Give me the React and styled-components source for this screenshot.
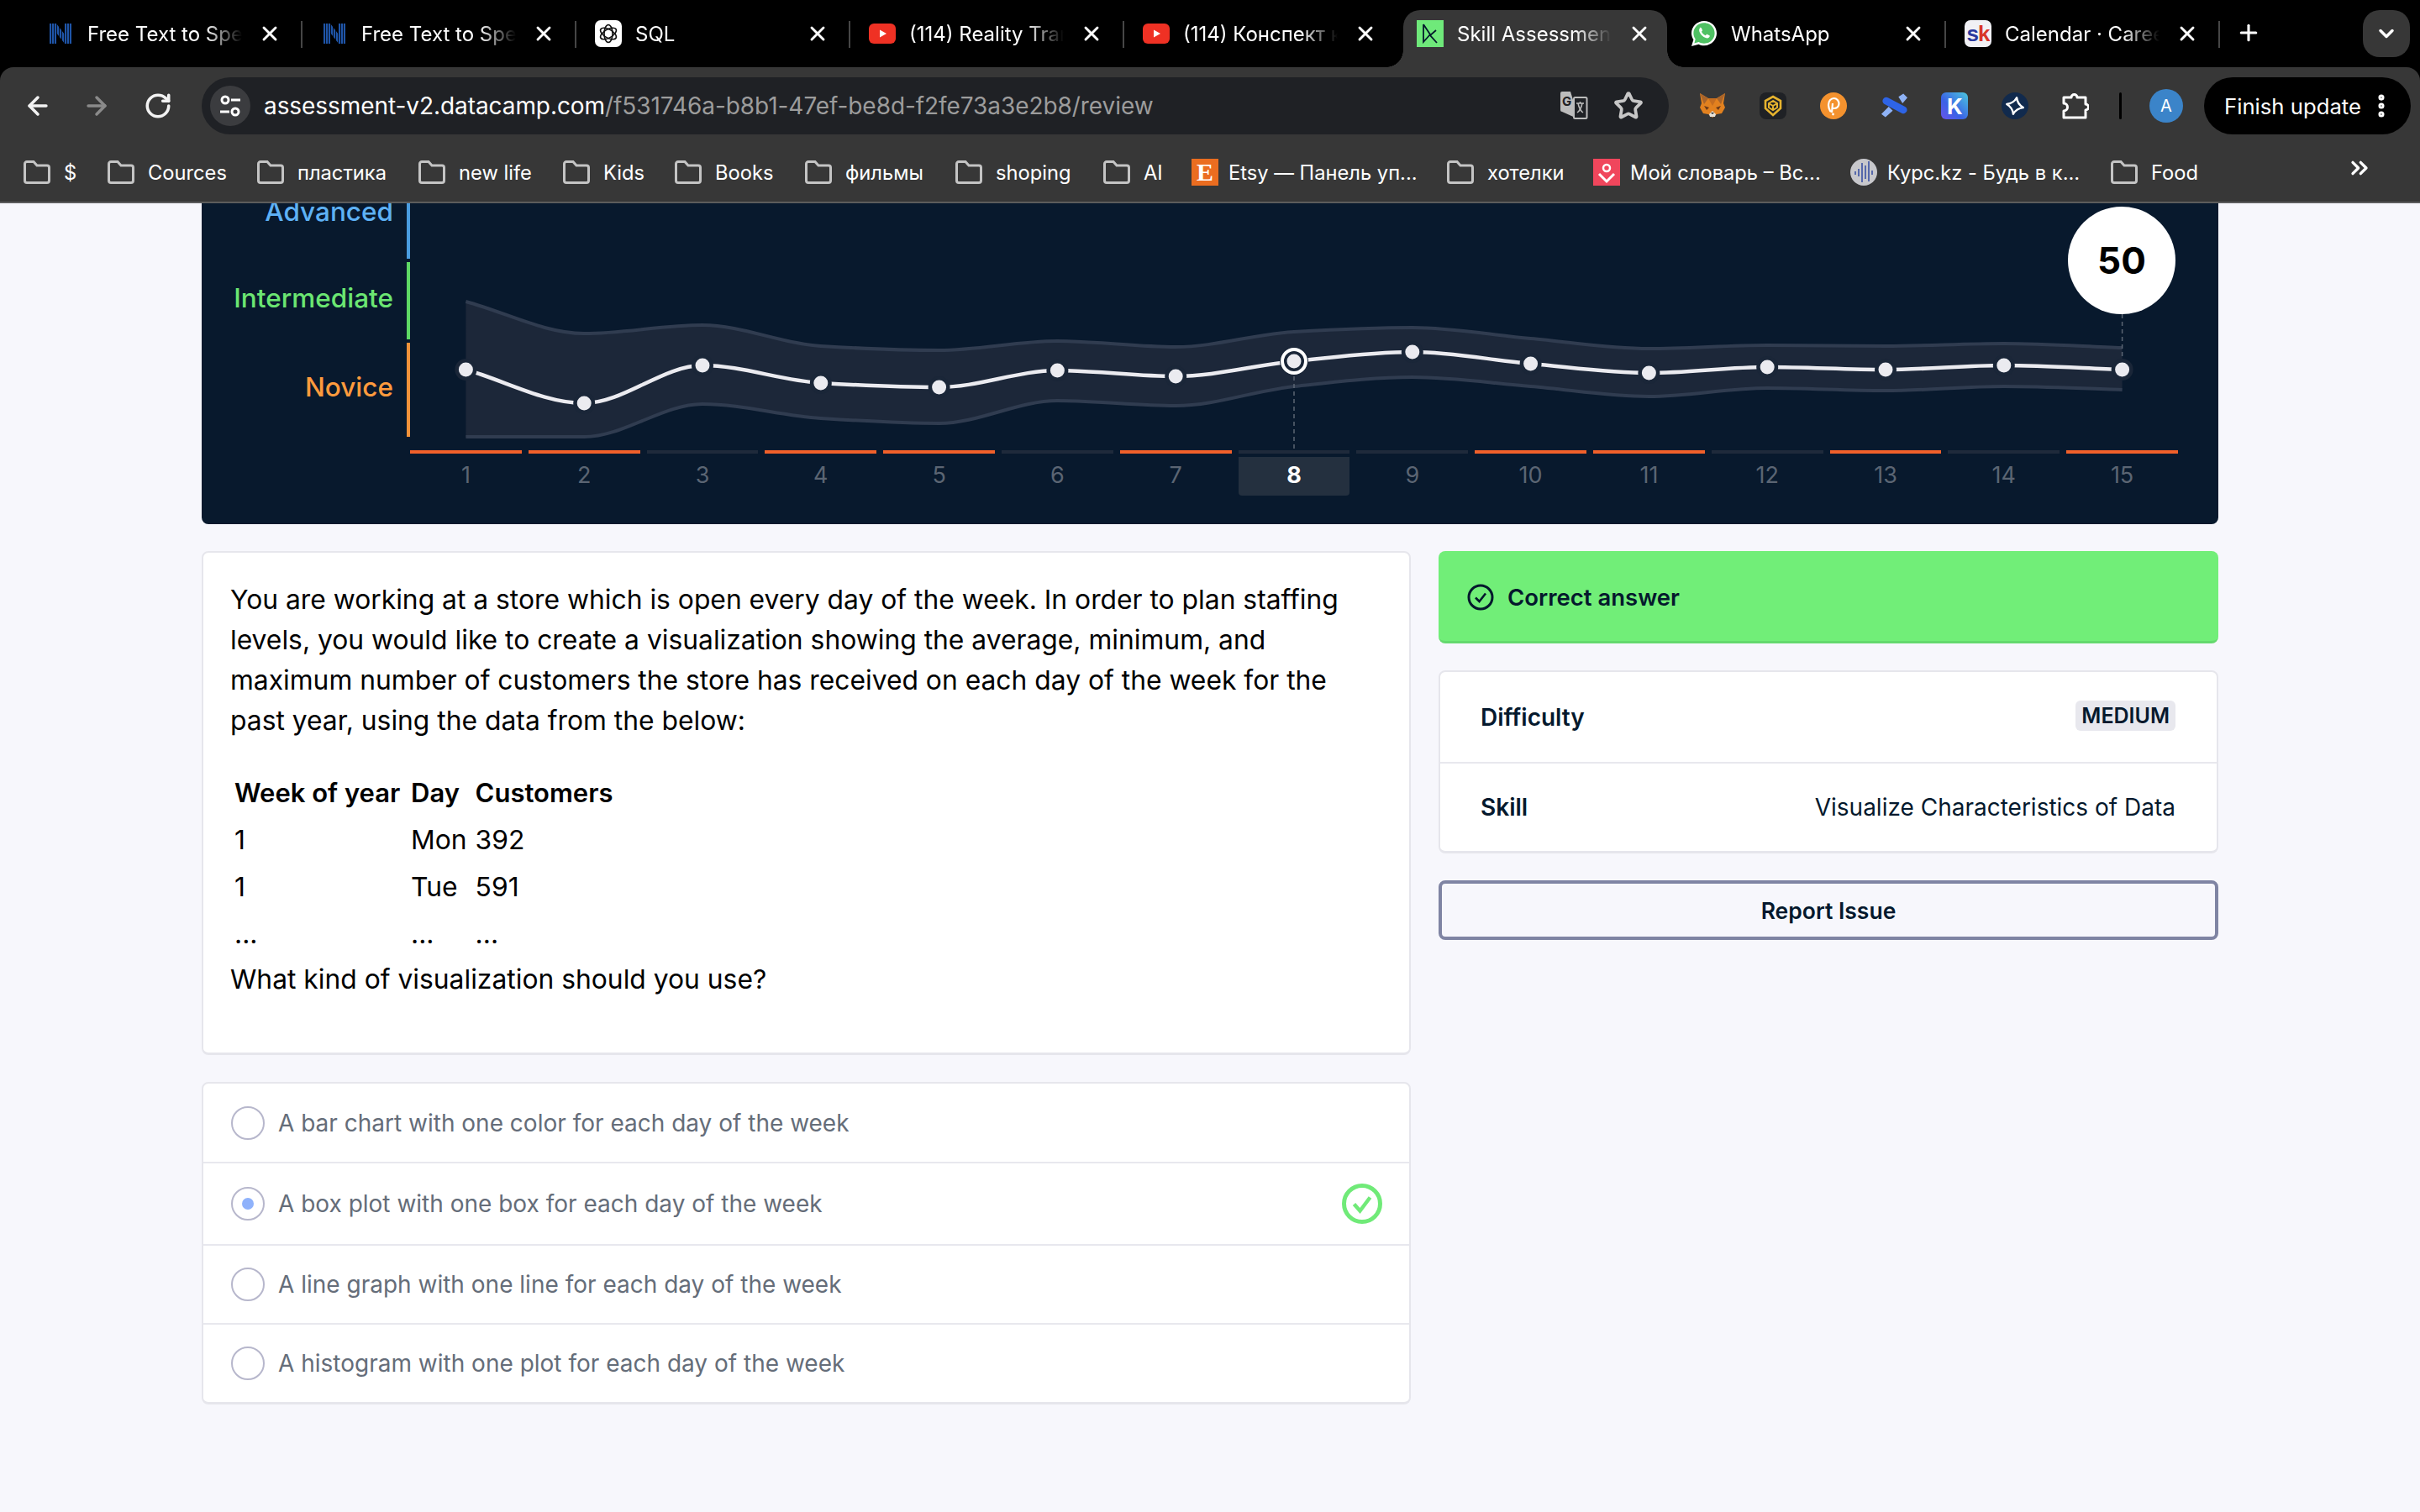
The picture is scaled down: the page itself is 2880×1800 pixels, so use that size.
import React from 'react';
import styled, { createGlobalStyle } from 'styled-components';
import { ArrowLeft, ArrowRight, RotateCw, Star, X, Plus, ChevronDown, EllipsisVertical, ChevronsRight } from 'lucide-react';

const GlobalStyle = createGlobalStyle`
  html, body {
    margin: 0;
    padding: 0;
    background: #f7f7fc;
  }
  * {
    box-sizing: border-box;
  }
`;

const chromeFont = `Inter, "Noto Sans", sans-serif`;
const pageFont = `Inter, "Noto Sans", sans-serif`;

const Screen = styled.div`
  width: 2880px;
  height: 1800px;
  overflow: hidden;
  display: flex;
  flex-direction: column;
  background: #f7f7fc;
`;

/* browser chrome */

const Chrome = styled.header`
  background: #000;
  font-family: ${chromeFont};
  color: #fff;
`;

const TabStrip = styled.div`
  height: 80px;
  padding-left: 34px;
  display: flex;
  align-items: flex-end;
  position: relative;
`;

const Tab = styled.div`
  width: 326px;
  height: 68px;
  padding: 0 0 12px 22px;
  display: flex;
  align-items: center;
  position: relative;
  flex: none;
  &::after {
    content: '';
    display: ${p => (p.$sep ? 'block' : 'none')};
    position: absolute;
    right: 0;
    top: 13px;
    width: 2px;
    height: 32px;
    background: #464646;
  }
  ${p => p.$active && `
    background: #373737;
    border-radius: 20px 20px 0 0;
    width: 314px;
    margin: 0 6px;
    padding-left: 16px;
    &::before, &::after {
      content: '';
      display: block;
      position: absolute;
      bottom: 0;
      top: auto;
      width: 20px;
      height: 20px;
      background: radial-gradient(circle at var(--cx) 0, #000 19.5px, #373737 20px);
    }
    &::before { left: -20px; --cx: 0; }
    &::after { right: -20px; --cx: 20px; }
  `}
`;

const Favicon = styled.span`
  width: 32px;
  height: 32px;
  flex: none;
  display: flex;
  align-items: center;
  justify-content: center;
`;

const TabTitle = styled.span`
  width: 186px;
  margin-left: 16px;
  font-size: 24px;
  white-space: nowrap;
  overflow: hidden;
  mask-image: linear-gradient(to right, #000 140px, transparent 184px);
`;

const TabClose = styled.span`
  margin-left: 17px;
  display: flex;
  color: #fff;
`;

const NewTab = styled.span`
  display: flex;
  position: absolute;
  left: 2661px;
  top: 24px;
  color: #fff;
`;

const TabMenu = styled.span`
  position: absolute;
  left: 2812px;
  top: 12px;
  width: 56px;
  height: 56px;
  border-radius: 20px;
  background: #373737;
  display: flex;
  align-items: center;
  justify-content: center;
`;

const Toolbar = styled.div`
  height: 80px;
  background: #373737;
  border-radius: 16px 16px 0 0;
  display: flex;
  align-items: flex-end;
  position: relative;
`;

const NavButton = styled.span`
  position: absolute;
  left: ${p => p.$x}px;
  top: 29px;
  display: flex;
  color: ${p => (p.$off ? '#8a8a8a' : '#f2f2f2')};
`;

const AddressBar = styled.div`
  margin-left: 240px;
  width: 1746px;
  height: 68px;
  border-radius: 34px;
  background: #1f2125;
  display: flex;
  align-items: center;
  padding: 0 30px 0 10px;
`;

const SiteInfo = styled.span`
  width: 48px;
  height: 48px;
  border-radius: 50%;
  background: #3b3c3f;
  display: flex;
  align-items: center;
  justify-content: center;
  flex: none;
`;

const Url = styled.div`
  margin-left: 16px;
  flex: 1;
  font-size: 28px;
  letter-spacing: -0.07px;
  color: #9c9c9c;
  white-space: nowrap;
  b {
    font-weight: 400;
    color: #fff;
  }
`;

const UrlAction = styled.span`
  display: flex;
  margin-left: ${p => p.$gap}px;
  color: #c7c7c7;
`;

const ExtensionRow = styled.div`
  margin-left: 36px;
  display: flex;
  align-items: center;
  height: 68px;
  gap: 40px;
`;

const Extension = styled.span`
  width: 32px;
  height: 32px;
  display: flex;
  align-items: center;
  justify-content: center;
  flex: none;
`;

const ToolDivider = styled.span`
  width: 3px;
  height: 32px;
  background: #000;
  border-radius: 2px;
  margin: 0 -2px 0 -4px;
`;

const Avatar = styled.span`
  width: 40px;
  height: 40px;
  border-radius: 50%;
  background: #3b84c9;
  font-size: 20px;
  display: flex;
  align-items: center;
  justify-content: center;
  flex: none;
  margin-left: -5px;
  margin-right: -15px;
`;

const UpdatePill = styled.div`
  width: 246px;
  height: 68px;
  border-radius: 34px;
  background: #000;
  display: flex;
  align-items: center;
  padding-left: 24px;
  font-size: 25.7px;
  white-space: nowrap;
  flex: none;
  svg {
    margin-left: 7px;
  }
`;

const Bookmarks = styled.nav`
  height: 82px;
  background: #373737;
  border-bottom: 2px solid #5c5c5c;
  display: flex;
  align-items: center;
  padding: 10px 0 0 28px;
  font-size: 23.7px;
  position: relative;
`;

const Bookmark = styled.span`
  width: ${p => p.$w}px;
  display: flex;
  align-items: center;
  gap: ${p => (p.$site ? 12 : 16)}px;
  flex: none;
  white-space: nowrap;
`;

const BookmarkMore = styled.span`
  position: absolute;
  left: 2792px;
  top: 24px;
  display: flex;
`;

/* score chart */

const Content = styled.main`
  padding: 0 240px;
  display: flex;
  flex-direction: column;
  gap: 32px;
`;

const ChartPanel = styled.section`
  height: 382px;
  background: #08192d;
  border-radius: 0 0 8px 8px;
  display: flex;
  overflow: hidden;
  font-family: ${pageFont};
`;

const LevelColumn = styled.div`
  width: 248px;
  margin-top: -46px;
  display: flex;
  flex-direction: column;
  gap: 4px;
  flex: none;
`;

const Level = styled.div`
  height: ${p => p.$h}px;
  padding: 0 16px ${p => p.$lift}px 0;
  border-right: 4px solid ${p => p.$bar};
  color: ${p => p.$color};
  font-size: 31.5px;
  font-weight: 500;
  display: flex;
  align-items: center;
  justify-content: flex-end;
`;

const ChartArea = styled.div`
  width: 2104px;
  position: relative;
`;

const ChartSvg = styled.svg`
  display: block;
`;

const ScoreBubble = styled.div`
  position: absolute;
  left: 1973px;
  top: 4px;
  width: 128px;
  height: 128px;
  border-radius: 50%;
  background: #fff;
  color: #000;
  font-size: 44px;
  font-weight: 700;
  display: flex;
  align-items: center;
  justify-content: center;
`;

const Ticks = styled.div`
  display: grid;
  grid-template-columns: repeat(15, 1fr);
  column-gap: 8px;
`;

const Tick = styled.div`
  display: flex;
  flex-direction: column;
  gap: 4px;
  align-items: stretch;
`;

const TickBar = styled.span`
  height: 4px;
  background: ${p => (p.$wrong ? '#f1602a' : '#1f2a3b')};
`;

const TickLabel = styled.span`
  height: 46px;
  padding-bottom: 3px;
  border-radius: 0 0 4px 4px;
  background: ${p => (p.$current ? '#24303f' : 'transparent')};
  color: ${p => (p.$current ? '#fff' : '#5b6573')};
  font-weight: ${p => (p.$current ? 700 : 400)};
  font-size: 27px;
  display: flex;
  align-items: center;
  justify-content: center;
`;

/* question */

const Columns = styled.div`
  display: grid;
  grid-template-columns: 1439px 928px;
  column-gap: 33px;
  font-family: ${pageFont};
  color: #05192d;
  align-items: start;
`;

const Stack = styled.div`
  display: flex;
  flex-direction: column;
  gap: ${p => p.$gap}px;
`;

const Card = styled.div`
  background: #fff;
  border: 2px solid #e6e6ec;
  border-bottom-width: 3px;
  border-radius: 8px;
`;

const QuestionCard = styled(Card)`
  height: 600px;
  padding: 32px 50px 32px 32px;
  font-size: 31.8px;
  line-height: 48px;
  color: #000;
`;

const Para = styled.p`
  margin: 0;
`;

const DataTable = styled.table`
  margin: 34px 0 2px;
  border-collapse: collapse;
  table-layout: fixed;
  th, td {
    padding: 4px 5px;
    text-align: left;
    line-height: 48px;
  }
  th {
    font-weight: 600;
    font-size: 31px;
    white-space: nowrap;
  }
`;

const Option = styled.div`
  height: ${p => p.$h}px;
  padding: 0 32px 0 33px;
  display: flex;
  align-items: center;
  font-size: 28px;
  color: #656d79;
  & + & {
    border-top: 2px solid #e8e8ee;
  }
`;

const Radio = styled.span`
  width: 40px;
  height: 40px;
  border-radius: 50%;
  border: 2px solid #b7b7cc;
  display: flex;
  align-items: center;
  justify-content: center;
  flex: none;
  margin-right: 16px;
  &::after {
    content: '';
    display: ${p => (p.$on ? 'block' : 'none')};
    width: 14px;
    height: 14px;
    border-radius: 50%;
    background: #8fb2fb;
  }
`;

const OptionText = styled.span`
  flex: 1;
`;

const Banner = styled.div`
  height: 110px;
  padding: 2px 0 0 34px;
  background: #71ee78;
  border-bottom: 3px solid #65d96e;
  border-radius: 8px;
  display: flex;
  align-items: center;
  gap: 16px;
  font-size: 27.5px;
  font-weight: 600;
`;

const InfoRow = styled.div`
  height: ${p => p.$h}px;
  padding: 0 49px 0 48px;
  display: flex;
  align-items: center;
  justify-content: space-between;
  font-size: 28px;
  & + & {
    border-top: 2px solid #e8e8ee;
  }
`;

const InfoLabel = styled.span`
  font-weight: 600;
`;

const InfoValue = styled.span`
  font-weight: 400;
`;

const Badge = styled.span`
  height: 36px;
  padding: 0 7px;
  border-radius: 6px;
  background: #e8e8ee;
  font-size: 25px;
  font-weight: 600;
  display: flex;
  align-items: center;
  margin-bottom: 4px;
`;

const ReportButton = styled.button`
  height: 71px;
  background: transparent;
  border: 4px solid #7f84a3;
  border-radius: 8px;
  font-family: inherit;
  font-size: 26.5px;
  font-weight: 600;
  color: #05192d;
`;

/* drawings */

const STEP = 140.8;
const FIRST_X = 554.4;
const pointX = i => FIRST_X + i * STEP;

const scores = [440, 480, 435, 456, 461, 441, 448, 430, 419, 433, 444, 437, 440, 435, 440];
const upper = [359, 397, 387, 412, 417, 406, 413, 395, 390, 403, 415, 411, 412, 409, 414];
const lower = [520, 520, 481, 498, 504, 477, 483, 460, 449, 460, 472, 462, 465, 460, 464];

// monotone cubic through the points, so the bands don't overshoot
const segments = ys => {
  const n = ys.length;
  const third = STEP / 3;
  const s = ys.slice(1).map((y, i) => (y - ys[i]) / STEP);
  const t = ys.map((_, i) => {
    if (i === 0) return s[0];
    if (i === n - 1) return s[n - 2];
    if (s[i - 1] * s[i] <= 0) return 0;
    return (2 * s[i - 1] * s[i]) / (s[i - 1] + s[i]);
  });
  return s.map((_, i) => ({
    x0: pointX(i),
    y0: ys[i],
    c1: `${pointX(i) + third} ${ys[i] + t[i] * third}`,
    c2: `${pointX(i + 1) - third} ${ys[i + 1] - t[i + 1] * third}`,
    x1: pointX(i + 1),
    y1: ys[i + 1],
  }));
};

const curve = ys => `M${pointX(0)} ${ys[0]}` + segments(ys).map(g => `C${g.c1} ${g.c2} ${g.x1} ${g.y1}`).join('');

const bandPath = () => {
  const back = segments(lower).reverse().map(g => `C${g.c2} ${g.c1} ${g.x0} ${g.y0}`).join('');
  return `${curve(upper)}L${pointX(14)} ${lower[14]}${back}Z`;
};

const ScoreChart = () => (
  <ChartSvg width="2104" height="294" viewBox="488 242 2104 294">
    <path d={bandPath()} fill="#1c2739" />
    <path d={curve(upper)} fill="none" stroke="#303c50" strokeWidth="4" />
    <path d={curve(lower)} fill="none" stroke="#303c50" strokeWidth="4" />
    <path d={`M${pointX(14)} 374V440`} stroke="#5b6573" strokeWidth="1.5" strokeDasharray="5 4" />
    <path d={`M${pointX(7)} 430V536`} stroke="#5b6573" strokeWidth="1.5" strokeDasharray="5 4" />
    <path d={curve(scores)} fill="none" stroke="#ebebf0" strokeWidth="4.5" />
    {scores.map((y, i) => (
      <g key={i}>
        <circle cx={pointX(i)} cy={y} r={i === 7 ? 17 : 13} fill="#1a2638" />
        {i === 7 && <circle cx={pointX(i)} cy={y} r="14" fill="#1a2638" stroke="#fff" strokeWidth="4" />}
        <circle cx={pointX(i)} cy={y} r="8.5" fill="#ebebf0" />
      </g>
    ))}
  </ChartSvg>
);

const NotionIcon = () => (
  <svg width="26" height="26" viewBox="0 0 26 26">
    <clipPath id="nclip">
      <path d="M0 1h8l10 13V1h8v24h-8L8 12v13H0z" />
    </clipPath>
    <g clipPath="url(#nclip)" stroke="#1f55a8" strokeWidth="2.2">
      {[1, 4, 7, 10, 13, 16, 19, 22, 25].map(x => <path key={x} d={`M${x} 0V26`} />)}
    </g>
  </svg>
);

const GptIcon = () => (
  <svg width="32" height="32" viewBox="0 0 32 32">
    <rect width="32" height="32" rx="7" fill="#fff" />
    <g fill="none" stroke="#111" strokeWidth="1.6">
      <ellipse cx="16" cy="16" rx="10.5" ry="5" transform="rotate(30 16 16)" />
      <ellipse cx="16" cy="16" rx="10.5" ry="5" transform="rotate(90 16 16)" />
      <ellipse cx="16" cy="16" rx="10.5" ry="5" transform="rotate(150 16 16)" />
    </g>
  </svg>
);

const YoutubeIcon = () => (
  <svg width="32" height="24" viewBox="0 0 32 24">
    <rect width="32" height="24" rx="6" fill="#ef3124" />
    <path d="M13 7.500l8 4.500-8 4.500z" fill="#fff" />
  </svg>
);

const DataCampIcon = () => (
  <svg width="32" height="32" viewBox="0 0 32 32">
    <rect width="32" height="32" fill="#6fe97a" />
    <path d="M8 5V26L16 17L8 5M23 12L16 18L24 27" fill="none" stroke="#05192d" strokeWidth="1.8" />
  </svg>
);

const WhatsappIcon = () => (
  <svg width="32" height="32" viewBox="0 0 32 32">
    <path d="M16 1C7.700 1 1 7.700 1 15.500c0 2.900.9 5.500 2.400 7.700L1 31l8.600-2.300c1.900 1 4.100 1.500 6.400 1.500 8.300 0 15-6.500 15-14.700S24.300 1 16 1z" fill="#fff" />
    <path d="M16 3.200C9 3.200 3.400 8.700 3.400 15.500c0 2.600.8 5 2.300 7l-1.300 5 5.200-1.400c1.900 1.100 4.100 1.700 6.400 1.700 7 0 12.600-5.500 12.600-12.300S23 3.200 16 3.200z" fill="#4fc163" />
    <path d="M11.500 9c-1.500 1.200-1.800 3.200-.7 5.500 1.400 3 4 5.500 7 6.600 2.300.8 4 .1 4.800-1.500.3-.7.2-1.100-.2-1.400l-2.600-1.300c-.5-.2-.8-.1-1.100.3l-.9 1.100c-2.100-.9-3.800-2.500-4.800-4.500l.8-1c.3-.4.3-.7.100-1.100l-1.100-2.500c-.4-.7-1.600-.7-2.300-.2z" fill="#fff" />
  </svg>
);

const SkBadge = styled.span`
  width: 32px;
  height: 32px;
  border-radius: 7px;
  background: #f1f1f5;
  font-family: "Liberation Sans", sans-serif;
  font-size: 26px;
  font-weight: 700;
  letter-spacing: -1px;
  display: flex;
  align-items: center;
  justify-content: center;
  b { color: #2b3a9e; }
  i { color: #d8352a; font-style: normal; }
`;

const EtsyBadge = styled.span`
  width: 32px;
  height: 32px;
  background: #eb6d20;
  color: #fff;
  font-family: "Liberation Serif", serif;
  font-size: 30px;
  font-weight: 700;
  display: flex;
  align-items: center;
  justify-content: center;
`;

const FolderIcon = () => (
  <svg width="32" height="28" viewBox="0 0 32 28" fill="none">
    <path d="M1.500 24V4A2.500 2.500 0 0 1 4 1.500h8l4 4.500h12a2.500 2.500 0 0 1 2.500 2.500V24a2.500 2.500 0 0 1-2.500 2.500H4A2.500 2.500 0 0 1 1.500 24z" stroke="#c4c4c4" strokeWidth="3" />
  </svg>
);

const SliderIcon = () => (
  <svg width="26" height="28" viewBox="0 0 26 28" fill="none" stroke="#fff" strokeWidth="3">
    <circle cx="7" cy="7" r="4" />
    <path d="M14 7h11M1 21h11" />
    <circle cx="19" cy="21" r="4" />
  </svg>
);

const TranslateIcon = () => (
  <svg width="34" height="34" viewBox="0 0 34 34">
    <path d="M3 0h10l10 33-20-9a2 2 0 0 1-2-2V2a2 2 0 0 1 2-2z" fill="#bcbcbc" />
    <rect x="17" y="7" width="15.500" height="25" rx="1.500" fill="#1f2125" stroke="#bcbcbc" strokeWidth="2" />
    <text x="3" y="17" fontSize="15" fontWeight="700" fontFamily="Inter, sans-serif" fill="#1f2125">G</text>
    <path d="M20 14h9M24.500 12v2M22 14c1 5 3 9 6 11M27 14c-1 5-3 9-6 11" fill="none" stroke="#bcbcbc" strokeWidth="1.500" />
  </svg>
);

const FoxIcon = () => (
  <svg width="32" height="32" viewBox="0 0 32 32">
    <path d="M1 1l10 6h10l10-6-2 12 2 5-4 7-6 1-5 4-5-4-6-1-4-7 2-5z" fill="#e2811f" />
    <path d="M1 1l10 6-5 7zM31 1L21 7l5 7z" fill="#a9642a" />
    <path d="M11 7h10l-5 9z" fill="#c66d20" />
    <path d="M6 16l6 2-3 3zM26 16l-6 2 3 3z" fill="#6b3a18" />
    <path d="M12 26l4-4 4 4-1 3h-6z" fill="#e9e2d8" />
    <path d="M14 24h4l-2 2z" fill="#222" />
  </svg>
);

const BeeIcon = () => (
  <svg width="32" height="32" viewBox="0 0 32 32">
    <rect width="32" height="32" rx="8" fill="#1f2125" />
    <path d="M16 5l9 5v9l-9 8-9-8v-9z" fill="none" stroke="#e6b32e" strokeWidth="2.600" />
    <path d="M16 10l-5 3v5l5 3 5-3v-5zM11 13l5 3 5-3M16 16v5" fill="none" stroke="#e6b32e" strokeWidth="2" />
  </svg>
);

const DotIcon = () => (
  <svg width="32" height="32" viewBox="0 0 32 32">
    <circle cx="16" cy="16" r="16" fill="#f4922e" />
    <path d="M13 23l-1-1c-1-2-2-4-2-7 0-5 3-8 6.500-8s6 3 6 6.500-3 5.500-5.500 5.500h-2M15 13l-1 11" fill="none" stroke="#fff" strokeWidth="2.200" />
    <circle cx="15.500" cy="26" r="1.400" fill="#fff" />
  </svg>
);

const SatelliteIcon = () => (
  <svg width="33" height="32" viewBox="0 0 33 32">
    <path d="M22 5l6-4 5 5-6 7zM1 26l9-9 5 5-9 8z" fill="#8fb2f5" />
    <path d="M7 10l21 11" stroke="#2e64e6" strokeWidth="9" strokeLinecap="round" />
  </svg>
);

const KIcon = () => (
  <svg width="32" height="32" viewBox="0 0 32 32">
    <defs>
      <linearGradient id="kfill" x1="1" y1="0" x2="0" y2="1">
        <stop offset="0" stopColor="#4cc7dc" />
        <stop offset="0.6" stopColor="#3a62e6" />
        <stop offset="1" stopColor="#6a55ea" />
      </linearGradient>
    </defs>
    <rect width="32" height="32" rx="6" fill="url(#kfill)" />
    <text x="7" y="26" fontSize="26" fontWeight="700" fontFamily="Inter, sans-serif" fill="#fff">K</text>
  </svg>
);

const SparkIcon = () => (
  <svg width="32" height="32" viewBox="0 0 32 32">
    <circle cx="16" cy="16" r="16" fill="#112a4d" />
    <path d="M16 6c1.500 5 4 8 10 10-6 2-8.500 5-10 10-1.500-5-4-8-10-10 6-2 8.500-5 10-10z" fill="none" stroke="#fff" strokeWidth="2.400" strokeLinejoin="round" transform="rotate(12 16 16)" />
  </svg>
);

const PuzzleIcon = () => (
  <svg width="32" height="32" viewBox="0 0 32 32" fill="none">
    <path d="M2 6H11a3.500 3.500 0 0 1 7 0H28V14a3.500 3.500 0 0 1 0 7V30H2V22a4.500 4.500 0 0 0 0-9z" stroke="#fff" strokeWidth="3" strokeLinejoin="round" />
  </svg>
);

const DictIcon = () => (
  <svg width="32" height="32" viewBox="0 0 32 32">
    <rect width="32" height="32" fill="#f0465c" />
    <circle cx="16" cy="11" r="4" fill="none" stroke="#fff" strokeWidth="2.500" />
    <path d="M7 18l9 9 9-9" fill="none" stroke="#fff" strokeWidth="3" />
  </svg>
);

const WaveIcon = () => (
  <svg width="32" height="32" viewBox="0 0 32 32">
    <circle cx="16" cy="16" r="16" fill="#c8c8cc" />
    <path d="M6 15v4M10 12v9M14 5v23M18 8v16M22 3v24M26 14v5" stroke="#4b5fa8" strokeWidth="1.800" />
  </svg>
);

const CircleCheck = () => (
  <svg width="32" height="32" viewBox="0 0 32 32" fill="none" stroke="#05192d">
    <circle cx="16" cy="16" r="14" strokeWidth="3" />
    <path d="M10 16.500l4.500 4.500 7.500-9.500" strokeWidth="2.600" />
  </svg>
);

const CorrectMark = () => (
  <svg width="48" height="48" viewBox="0 0 48 48" fill="none" stroke="#70ea78">
    <circle cx="24" cy="24" r="21.500" strokeWidth="5" />
    <path d="M14.500 24.500l7 8 12-16" strokeWidth="4.500" />
  </svg>
);

/* data */

const tabs = [
  { icon: <NotionIcon />, title: 'Free Text to Speech', sep: true },
  { icon: <NotionIcon />, title: 'Free Text to Speech', sep: true },
  { icon: <GptIcon />, title: 'SQL', sep: true },
  { icon: <YoutubeIcon />, title: '(114) Reality Transurfing', sep: true },
  { icon: <YoutubeIcon />, title: '(114) Конспект книги' },
  { icon: <DataCampIcon />, title: 'Skill Assessment', active: true },
  { icon: <WhatsappIcon />, title: 'WhatsApp', sep: true },
  { icon: <SkBadge><b>s</b><i>k</i></SkBadge>, title: 'Calendar · Career', sep: true },
];

const bookmarks = [
  { label: '$', w: 100 },
  { label: 'Cources', w: 178 },
  { label: 'пластика', w: 192 },
  { label: 'new life', w: 172 },
  { label: 'Kids', w: 133 },
  { label: 'Books', w: 155 },
  { label: 'фильмы', w: 179 },
  { label: 'shoping', w: 176 },
  { label: 'AI', w: 105 },
  { label: 'Etsy — Панель уп...', w: 304, icon: <EtsyBadge>E</EtsyBadge> },
  { label: 'хотелки', w: 174 },
  { label: 'Мой словарь – Вс...', w: 306, icon: <DictIcon /> },
  { label: 'Курс.kz - Будь в к...', w: 310, icon: <WaveIcon /> },
  { label: 'Food', w: 104 },
];

const extensions = [<FoxIcon />, <BeeIcon />, <DotIcon />, <SatelliteIcon />, <KIcon />, <SparkIcon />, <PuzzleIcon />];

const wrong = [1, 2, 4, 5, 7, 10, 11, 13, 15];

const options = [
  { text: 'A bar chart with one color for each day of the week', h: 93 },
  { text: 'A box plot with one box for each day of the week', h: 98, picked: true },
  { text: 'A line graph with one line for each day of the week', h: 94 },
  { text: 'A histogram with one plot for each day of the week', h: 94 },
];

const App = () => (
  <Screen>
    <GlobalStyle />
    <Chrome>
      <TabStrip>
        {tabs.map((t, i) => (
          <Tab key={i} $sep={t.sep} $active={t.active}>
            <Favicon>{t.icon}</Favicon>
            <TabTitle>{t.title}</TabTitle>
            <TabClose><X size={28} strokeWidth={2.5} /></TabClose>
          </Tab>
        ))}
        <NewTab><Plus size={30} strokeWidth={2.5} /></NewTab>
        <TabMenu><ChevronDown size={28} strokeWidth={3} /></TabMenu>
      </TabStrip>
      <Toolbar>
        <NavButton $x={28}><ArrowLeft size={34} strokeWidth={2.5} /></NavButton>
        <NavButton $x={98} $off><ArrowRight size={34} strokeWidth={2.5} /></NavButton>
        <NavButton $x={171}><RotateCw size={34} strokeWidth={2.5} /></NavButton>
        <AddressBar>
          <SiteInfo><SliderIcon /></SiteInfo>
          <Url><b>assessment-v2.datacamp.com</b>/f531746a-b8b1-47ef-be8d-f2fe73a3e2b8/review</Url>
          <UrlAction><TranslateIcon /></UrlAction>
          <UrlAction $gap={30}><Star size={36} strokeWidth={2.5} /></UrlAction>
        </AddressBar>
        <ExtensionRow>
          {extensions.map((e, i) => <Extension key={i}>{e}</Extension>)}
          <ToolDivider />
          <Avatar>A</Avatar>
          <UpdatePill>
            Finish update
            <EllipsisVertical size={34} strokeWidth={3} />
          </UpdatePill>
        </ExtensionRow>
      </Toolbar>
      <Bookmarks>
        {bookmarks.map(b => (
          <Bookmark key={b.label} $w={b.w} $site={!!b.icon}>
            {b.icon || <FolderIcon />}
            {b.label}
          </Bookmark>
        ))}
        <BookmarkMore><ChevronsRight size={32} strokeWidth={2.5} /></BookmarkMore>
      </Bookmarks>
    </Chrome>
    <Content>
      <ChartPanel>
        <LevelColumn>
          <Level $h={112} $lift={2} $bar="#4a9de0" $color="#5eb1f5">Advanced</Level>
          <Level $h={92} $lift={8} $bar="#5ed865" $color="#6be672">Intermediate</Level>
          <Level $h={112} $lift={8} $bar="#f0923a" $color="#ff9b3d">Novice</Level>
        </LevelColumn>
        <ChartArea>
          <ScoreChart />
          <ScoreBubble>50</ScoreBubble>
          <Ticks>
            {Array.from({ length: 15 }, (_, i) => i + 1).map(n => (
              <Tick key={n}>
                <TickBar $wrong={wrong.includes(n)} />
                <TickLabel $current={n === 8}>{n}</TickLabel>
              </Tick>
            ))}
          </Ticks>
        </ChartArea>
      </ChartPanel>
      <Columns>
        <Stack $gap={32}>
          <QuestionCard>
            <Para>You are working at a store which is open every day of the week. In order to plan staffing levels, you would like to create a visualization showing the average, minimum, and maximum number of customers the store has received on each day of the week for the past year, using the data from the below:</Para>
            <DataTable>
              <colgroup>
                <col width="210" />
                <col width="70" />
                <col width="200" />
              </colgroup>
              <thead>
                <tr><th>Week of year</th><th>Day</th><th>Customers</th></tr>
              </thead>
              <tbody>
                <tr><td>1</td><td>Mon</td><td>392</td></tr>
                <tr><td>1</td><td>Tue</td><td>591</td></tr>
                <tr><td>...</td><td>...</td><td>...</td></tr>
              </tbody>
            </DataTable>
            <Para>What kind of visualization should you use?</Para>
          </QuestionCard>
          <Card>
            {options.map(o => (
              <Option key={o.text} $h={o.h}>
                <Radio $on={o.picked} />
                <OptionText>{o.text}</OptionText>
                {o.picked && <CorrectMark />}
              </Option>
            ))}
          </Card>
        </Stack>
        <Stack $gap={32}>
          <Banner>
            <CircleCheck />
            Correct answer
          </Banner>
          <Card>
            <InfoRow $h={107}>
              <InfoLabel>Difficulty</InfoLabel>
              <Badge>MEDIUM</Badge>
            </InfoRow>
            <InfoRow $h={106}>
              <InfoLabel>Skill</InfoLabel>
              <InfoValue>Visualize Characteristics of Data</InfoValue>
            </InfoRow>
          </Card>
          <ReportButton>Report Issue</ReportButton>
        </Stack>
      </Columns>
    </Content>
  </Screen>
);

export default App;
